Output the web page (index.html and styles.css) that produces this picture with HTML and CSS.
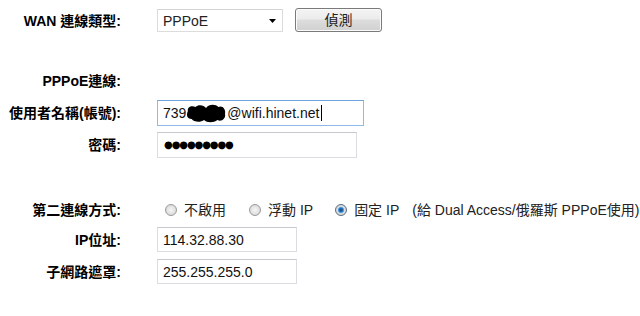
FILE: index.html
```html
<!DOCTYPE html>
<html>
<head>
<meta charset="utf-8">
<link rel="stylesheet" href="styles.css">
</head>
<body>
<div class="form">
  <div class="row row-wan">
    <div class="label">WAN 連線類型:</div>
    <div class="select"><span class="select-text">PPPoE</span><svg class="arrow" width="7" height="4" viewBox="0 0 7 4"><path d="M0 0H7L3.5 4Z" fill="#000"/></svg></div>
    <button class="btn">偵測</button>
  </div>
  <div class="row row-pppoe">
    <div class="label">PPPoE連線:</div>
  </div>
  <div class="row row-user">
    <div class="label">使用者名稱(帳號):</div>
    <div class="field field-user focused"><span>739</span><svg class="blob" width="40" height="19" viewBox="0 0 42 19" preserveAspectRatio="none"><path d="M2 7C1 3 6 1 10 3C13 0 19 1 21 4C24 0 31 0 34 3C38 1 42 5 41 10C42 15 37 18 33 16C29 19 22 19 19 16C15 19 8 18 6 15C1 15 0 11 2 7Z" fill="#000"/></svg><span>@wifi.hinet.net</span><span class="caret"></span></div>
  </div>
  <div class="row row-pass">
    <div class="label">密碼:</div>
    <div class="field field-pass"><span class="dots">●●●●●●●●●</span></div>
  </div>
  <div class="row row-radio">
    <div class="label">第二連線方式:</div>
    <div class="options">
      <span class="radio r1"></span><span class="opt">不啟用</span>
      <span class="radio r2"></span><span class="opt">浮動 IP</span>
      <span class="radio r3 checked"></span><span class="opt">固定 IP</span>
      <span class="note">(給 Dual Access/俄羅斯 PPPoE使用)</span>
    </div>
  </div>
  <div class="row row-ip">
    <div class="label">IP位址:</div>
    <div class="field field-ip">114.32.88.30</div>
  </div>
  <div class="row row-mask">
    <div class="label">子網路遮罩:</div>
    <div class="field field-ip">255.255.255.0</div>
  </div>
</div>
</body>
</html>
```
FILE: styles.css
```css
html, body {
  margin: 0;
  padding: 0;
  background: #fff;
}
body {
  font-family: "Liberation Sans", "Noto Sans CJK TC", sans-serif;
  font-size: 14px;
  color: #111;
  width: 640px;
  height: 316px;
  overflow: hidden;
}
.form {
  padding-top: 9px;
  display: flex;
  flex-direction: column;
}
.row {
  display: flex;
  align-items: center;
  line-height: 16px;
}
.label {
  flex: none;
  width: 121px;
  margin-right: 36px;
  text-align: right;
  font-weight: bold;
  color: #000;
  white-space: nowrap;
}
.row-wan { height: 24px; }
.row-pppoe { height: 20px; margin-top: 38px; }
.row-user { height: 26px; margin-top: 9px; }
.row-pass { height: 26px; margin-top: 6px; }
.row-radio { height: 20px; margin-top: 42px; }
.row-ip { height: 25px; margin-top: 7px; }
.row-mask { height: 25px; margin-top: 7px; }

.select {
  box-sizing: border-box;
  width: 126px;
  height: 23px;
  border: 1px solid #dcdcdc;
  border-top-color: #d2d2d2;
  display: flex;
  align-items: center;
  padding-left: 5px;
  padding-right: 6px;
  color: #222;
  align-self: flex-start;
}
.select-text { flex: 1; }
.arrow { display: block; margin-top: 1px; }
.btn {
  box-sizing: border-box;
  margin-left: 12px;
  width: 87px;
  height: 24px;
  align-self: flex-start;
  margin-top: -1px;
  border: 1px solid #7a7a7a;
  border-radius: 3px;
  background: linear-gradient(#f4f4f4 0%, #ececec 45%, #dddddd 50%, #d0d0d0 100%);
  box-shadow: inset 0 0 0 1px #fbfbfb;
  font-family: "Liberation Sans", "Noto Sans CJK TC", sans-serif;
  font-size: 14px;
  color: #222;
  padding: 0;
  line-height: 16px;
}
.field {
  box-sizing: border-box;
  height: 100%;
  border: 1px solid #dadde2;
  border-top-color: #c5c8cc;
  display: flex;
  align-items: center;
  padding-left: 5px;
  color: #111;
  white-space: nowrap;
}
.field-user {
  width: 207px;
  border-color: #8cbbe9;
  border-top-color: #6fa5dc;
}
.blob { display: block; margin: 1px 1px 0 0; }
.caret {
  display: inline-block;
  width: 1px;
  height: 16px;
  background: #000;
  margin-left: 2px;
}
.field-pass { width: 200px; }
.dots {
  font-family: "DejaVu Sans", sans-serif;
  font-size: 10px;
  letter-spacing: -1.1px;
  color: #000;
  padding-left: 1px;
}
.field-ip { width: 140px; }

.options {
  display: flex;
  align-items: center;
  white-space: nowrap;
  color: #222;
}
.radio {
  flex: none;
  box-sizing: border-box;
  width: 12px;
  height: 12px;
  border-radius: 50%;
  border: 1px solid #9a9a9a;
  background: radial-gradient(circle at 50% 50%, #f6f6f6 0%, #e2e2e2 55%, #cfcfcf 100%);
  margin-right: 7px;
  position: relative;
}
.r1 { margin-left: 8px; }
.r2 { margin-left: 23px; }
.r3 { margin-left: 22px; }
.radio.checked {
  border-color: #5a6d82;
  background: radial-gradient(circle at 50% 50%, #1a3c6a 0%, #2b7bc8 30%, #6fb4ee 42%, #dcdcdc 50%, #cfcfcf 100%);
}
.note { margin-left: 13px; }
```
